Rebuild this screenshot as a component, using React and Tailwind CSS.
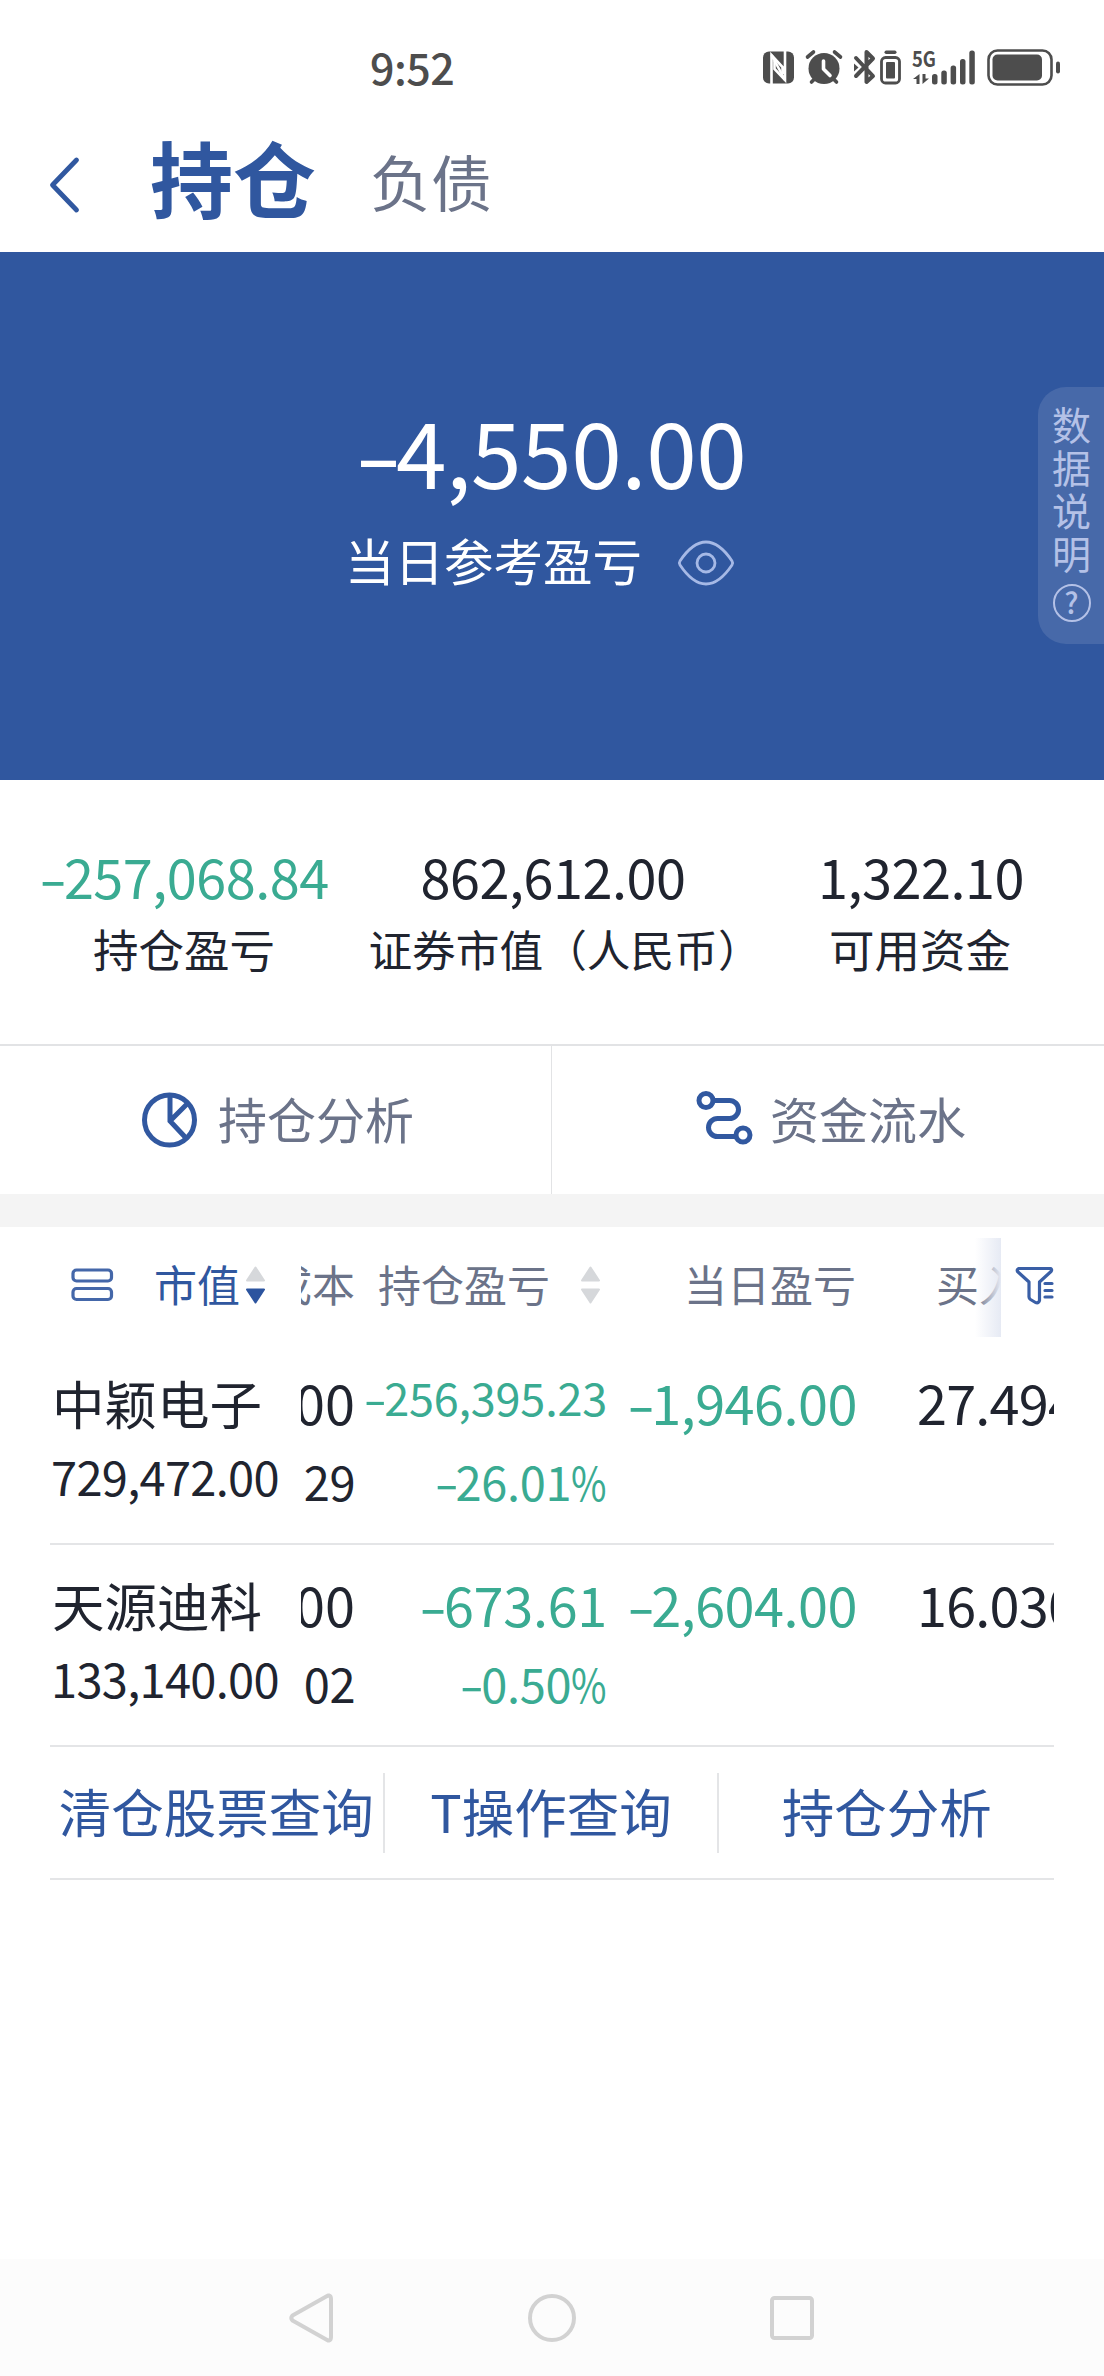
import React, { useState } from "react";

const stats = [
  { label: "持仓盈亏", value: "-257,068.84", green: true },
  { label: "证券市值（人民币）", value: "862,612.00", wide: true },
  { label: "可用资金", value: "1,322.10" },
];

const holdings = [
  {
    name: "中颖电子",
    marketValue: "729,472.00",
    price: "00",
    cost: "29",
    profit: "-256,395.23",
    rate: "-26.01%",
    today: "-1,946.00",
    buy: "27.494",
    small: true,
  },
  {
    name: "天源迪科",
    marketValue: "133,140.00",
    price: "00",
    cost: "02",
    profit: "-673.61",
    rate: "-0.50%",
    today: "-2,604.00",
    buy: "16.030",
  },
];

const links = ["清仓股票查询", "T操作查询", "持仓分析"];

// amount with a wider minus sign and a narrower percent sign
function Amount({ value }) {
  const negative = value.startsWith("-");
  const percent = value.endsWith("%");
  return (
    <>
      {negative && (
        <span className="inline-block w-[0.4em] text-center scale-x-150">
          -
        </span>
      )}
      {value.replace(/[-%]/g, "")}
      {percent && (
        <span className="inline-block w-[0.76em] origin-left scale-x-[0.82]">
          %
        </span>
      )}
    </>
  );
}

function SortArrows({ active }) {
  return (
    <svg width="21" height="38" viewBox="0 0 21 38" className="shrink-0">
      <path
        d="M10.5 1.5L19 14.5H2Z"
        fill="#d6d8db"
        stroke="#d6d8db"
        strokeWidth="2"
        strokeLinejoin="round"
      />
      <path
        d="M10.5 36.5L19 23.5H2Z"
        fill={active ? "#2c549f" : "#d6d8db"}
        stroke={active ? "#2c549f" : "#d6d8db"}
        strokeWidth="2"
        strokeLinejoin="round"
      />
    </svg>
  );
}

function StatusBar() {
  return (
    <div className="h-[112px] flex justify-between">
      <div className="pl-[370px] pt-[36px] text-[43px] leading-[60px] font-medium tracking-[-0.5px] text-[#4d4d4d]">
        9:52
      </div>
      <svg
        width="364"
        height="80"
        viewBox="0 0 364 80"
        fill="#4d4d4d"
        stroke="none"
        className="mt-[30px]"
      >
        {/* nfc */}
        <rect x="23" y="21.5" width="31" height="32" rx="6" />
        <path
          d="M31.500 54V25L42.500 37V44M45 21V50L34.500 39V31"
          fill="none"
          stroke="#fff"
          strokeWidth="2.6"
        />
        <path d="M31.500 25L45 50" stroke="#fff" strokeWidth="2.6" />
        {/* alarm */}
        <circle cx="84" cy="38.5" r="15.5" />
        <path
          d="M67.5 27L73.5 22M100.5 27L94.5 22M71.5 52L76 47.5M96.5 52L92 47.5"
          stroke="#4d4d4d"
          strokeWidth="3.6"
          strokeLinecap="round"
        />
        <path
          d="M83.5 31V39L90 45.5"
          fill="none"
          stroke="#fff"
          strokeWidth="3.6"
          strokeLinecap="round"
          strokeLinejoin="round"
        />
        {/* bluetooth */}
        <path
          d="M116 28L133 46L126.500 52V22L133 28.500L116 46"
          fill="none"
          stroke="#4d4d4d"
          strokeWidth="4"
          strokeLinecap="round"
          strokeLinejoin="round"
        />
        <path d="M114 33.500L118.500 37.500L114 41.500Z" />
        <rect x="144.500" y="20.500" width="12" height="3.500" rx="1.700" />
        <rect
          x="141.500"
          y="27.500"
          width="18"
          height="25.500"
          rx="4"
          fill="none"
          stroke="#4d4d4d"
          strokeWidth="2.800"
        />
        <rect x="146" y="32" width="9" height="16.500" rx="1" />
        {/* network */}
        <text
          x="172"
          y="37"
          fontSize="21.5"
          fontWeight="700"
          fontFamily="Noto Sans CJK SC, sans-serif"
          textLength="24"
          lengthAdjust="spacingAndGlyphs"
        >
          5G
        </text>
        <path d="M179.500 44V54H176.500V49H173ZM182.500 44V54L189 48.500H185.500V44Z" />
        <rect x="192" y="44" width="5.500" height="10.500" rx="2.500" />
        <rect x="201.300" y="40.500" width="5.500" height="14" rx="2.500" />
        <rect x="210.600" y="35.500" width="5.500" height="19" rx="2.500" />
        <rect x="220" y="29" width="5.500" height="25.500" rx="2.500" />
        <rect x="229.300" y="20.500" width="5.500" height="34" rx="2.500" />
        {/* battery */}
        <rect
          x="248.500"
          y="20.500"
          width="63"
          height="34"
          rx="9"
          fill="none"
          stroke="#4d4d4d"
          strokeWidth="2.600"
        />
        <rect x="252.500" y="24.500" width="49.500" height="26" rx="5" />
        <rect x="316" y="31.500" width="4" height="12" rx="2" />
      </svg>
    </div>
  );
}

function App() {
  const [tab, setTab] = useState("持仓");

  return (
    <div className="w-[1104px] h-[2376px] flex flex-col overflow-hidden bg-white text-[#20242f] font-['Noto_Sans_CJK_SC',sans-serif] whitespace-nowrap">
      <StatusBar />

      {/* Header */}
      <div className="h-[140px] flex items-center pl-[48px]">
        <svg width="34" height="60" viewBox="0 0 34 60" className="mt-[6px]">
          <path
            d="M28.500 5L4.500 30L28.500 55"
            fill="none"
            stroke="#3158a0"
            strokeWidth="4.800"
            strokeLinecap="round"
            strokeLinejoin="round"
          />
        </svg>
        <button
          className="ml-[68px] mt-[-12px] text-[83px] leading-[100px] font-bold text-[#30579f]"
          onClick={() => setTab("持仓")}
        >
          持仓
        </button>
        <button
          className="ml-[54px] mt-[-2px] text-[61px] leading-[80px] text-[#6b7389]"
          onClick={() => setTab("负债")}
        >
          负债
        </button>
      </div>

      {/* Today profit */}
      <div className="h-[528px] bg-[#30579f] text-white relative flex flex-col items-center">
        <div className="mt-[144px] pl-[2px] text-[91px] leading-[106px] tracking-[-0.4px]">
          <Amount value="-4,550.00" />
        </div>
        <div className="mt-[26px] flex items-center pr-[34px]">
          <span className="ml-[10px] text-[49.5px] leading-[64px]">当日参考盈亏</span>
          <svg
            width="58"
            height="48"
            viewBox="0 0 58 48"
            fill="none"
            stroke="#a6b9e6"
            strokeWidth="2.800"
            className="ml-[35px] mt-[5px]"
          >
            <path d="M3 22Q1.700 24 3 26C11 38 19 45 29 45S47 38 55 26Q56.300 24 55 22C47 10 39 3 29 3S11 10 3 22Z" />
            <circle cx="29" cy="24" r="9" />
          </svg>
        </div>
        <div className="absolute right-0 top-[135px] w-[66px] h-[257px] rounded-l-[28px] bg-[#4769a9] text-[#b4c1e7] flex flex-col items-center pt-[15px] pl-[1px]">
          {["数", "据", "说", "明"].map((ch) => (
            <span key={ch} className="h-[43px] text-[39px] leading-[43px]">
              {ch}
            </span>
          ))}
          <span className="mt-[10px] size-[38px] rounded-full border-[2.5px] border-[#b4c1e7] text-[29px] leading-[30px] font-medium text-center">
            ?
          </span>
        </div>
      </div>

      {/* Stats */}
      <div className="h-[264px] grid grid-cols-3">
        {stats.map((item) => (
          <div key={item.label} className="flex flex-col items-center pt-[63px]">
            <div
              className={
                item.green
                  ? "pl-[3px] text-[54px] leading-[66px] tracking-[-0.5px] text-[#3aab92]"
                  : "pl-[2px] text-[54px] leading-[66px] tracking-[-0.5px]"
              }
            >
              <Amount value={item.value} />
            </div>
            <div
              className={
                item.wide
                  ? "ml-[26px] mt-[9px] text-[43.7px] leading-[60px]"
                  : "mt-[9px] text-[45.5px] leading-[60px]"
              }
            >
              {item.label}
            </div>
          </div>
        ))}
      </div>

      {/* Shortcuts */}
      <div className="h-[150px] grid grid-cols-2 border-t-2 border-[#e2e3e5] text-[49px] text-[#6b7389]">
        <div className="flex items-center pl-[142px] border-r border-[#e2e3e5]">
          <svg
            width="56"
            height="58"
            viewBox="0 0 56 58"
            fill="none"
            stroke="#3158a0"
            strokeWidth="5"
            className="-mt-px"
          >
            <circle cx="27.500" cy="29" r="25" />
            <path d="M28 5V30L44 47M28 30L46 12" />
          </svg>
          <span className="ml-[20px] -mt-[5px]">持仓分析</span>
        </div>
        <div className="flex items-center pl-[144px]">
          <svg
            width="58"
            height="58"
            viewBox="0 0 58 58"
            fill="none"
            stroke="#3158a0"
            strokeWidth="5"
            className="-mt-[3px]"
          >
            <circle cx="10" cy="10.500" r="7" />
            <path d="M17 10.500H33.500A9 9 0 0 1 33.500 28.500H21.500A9 9 0 0 0 21.500 46.500H40" />
            <circle cx="47" cy="45" r="7" />
          </svg>
          <span className="ml-[16px] -mt-[5px]">资金流水</span>
        </div>
      </div>

      <div className="h-[33px] bg-[#f4f4f4]" />

      {/* Table header */}
      <div className="h-[116px] flex pl-[50px] text-[43px] leading-[114px] text-[#6b7389]">
        <div className="w-[251px] flex items-center pl-[21px] text-[#30579f]">
          <svg
            width="43"
            height="34"
            viewBox="0 0 43 34"
            fill="none"
            stroke="#4467a9"
            strokeWidth="3.200"
          >
            <rect x="2" y="2" width="38.500" height="11" rx="3.500" />
            <rect x="2" y="20.500" width="38.500" height="11" rx="3.500" />
          </svg>
          <span className="ml-[40px] -mt-[4px]">市值</span>
          <span className="ml-[5px]">
            <SortArrows active />
          </span>
        </div>
        <div className="w-[700px] flex relative overflow-hidden -mt-px">
          <div className="w-[54px] shrink-0 flex justify-end">成本</div>
          <div className="w-[252px] h-[114px] shrink-0 flex items-center pl-[23px]">
            持仓盈亏
            <span className="ml-[30px] mt-[3px]">
              <SortArrows />
            </span>
          </div>
          <div className="w-[249px] shrink-0 text-right">当日盈亏</div>
          <div className="shrink-0 pl-[80px]">买入</div>
          <div className="absolute right-0 top-[12px] w-[26px] h-[99px] bg-linear-to-r from-[#e6eaf4]/0 to-[#e6eaf4]" />
        </div>
        <svg
          width="40"
          height="40"
          viewBox="0 0 40 40"
          fill="none"
          stroke="#3a5fa6"
          strokeWidth="3.200"
          strokeLinecap="round"
          strokeLinejoin="round"
          className="ml-[14px] mt-[39px]"
        >
          <path d="M4 2.500H35.500Q37.500 3.500 36 5.500L24.500 16V34.500Q23.500 37.500 20.500 36.500L15.500 33.500Q14 32.500 14 31V16L2.500 5.500Q1.500 3.500 4 2.500Z" />
          <path d="M30 17.500H37M30 24.500H37M30 31H37" />
        </svg>
      </div>

      {/* Holdings */}
      <div className="ml-[50px] w-[1004px]">
        {holdings.map((row) => (
          <div key={row.name} className="h-[202px] flex border-b-2 border-[#e4e5e7]">
            <div className="w-[251px] shrink-0 pt-[22px] pl-[2px]">
              <div className="text-[52.5px] leading-[74px]">{row.name}</div>
              <div className="-ml-px text-[47px] leading-[74px] tracking-[-0.7px]">
                {row.marketValue}
              </div>
            </div>
            <div className="w-[753px] flex overflow-hidden pt-[22px]">
              <div className="w-[54px] shrink-0 flex flex-col items-end">
                <div className="text-[54px] leading-[74px]">{row.price}</div>
                <div className="text-[47px] leading-[84px] tracking-[-0.5px]">
                  {row.cost}
                </div>
              </div>
              <div className="w-[252px] shrink-0 flex flex-col items-end text-[#3aab92]">
                <div
                  className={
                    row.small
                      ? "h-[74px] text-[45px] leading-[64px] tracking-[-0.2px]"
                      : "text-[54px] leading-[74px] tracking-[-0.3px]"
                  }
                >
                  <Amount value={row.profit} />
                </div>
                <div className="text-[47px] leading-[84px] tracking-[-0.3px]">
                  <Amount value={row.rate} />
                </div>
              </div>
              <div className="w-[250px] shrink-0 text-right text-[54px] leading-[74px] tracking-[-0.5px] text-[#3aab92]">
                <Amount value={row.today} />
              </div>
              <div className="shrink-0 pl-[60px] text-[54px] leading-[74px] tracking-[-0.8px]">
                {row.buy}
              </div>
            </div>
          </div>
        ))}

        <div className="h-[133px] grid grid-cols-3 items-center border-b-2 border-[#e4e5e7] text-[52.5px] text-[#30579f]">
          {links.map((link) => (
            <div
              key={link}
              className="h-[80px] leading-[74px] text-center border-r-2 border-[#e4e5e7] last:border-r-0"
            >
              {link}
            </div>
          ))}
        </div>
      </div>

      {/* System navigation */}
      <div className="mt-auto h-[117px] bg-[#fcfcfc] flex items-center justify-center gap-[192px]">
        <svg
          width="48"
          height="52"
          viewBox="0 0 48 52"
          fill="none"
          stroke="#d2d2d2"
          strokeWidth="4"
          strokeLinejoin="round"
        >
          <path d="M41 3.500Q43 4 43 7V45Q43 48 41 48.500H40L4.500 28.500Q2 26 4.500 23.500L40 3.500Z" />
        </svg>
        <svg
          width="48"
          height="48"
          viewBox="0 0 48 48"
          fill="none"
          stroke="#d2d2d2"
          strokeWidth="4"
        >
          <circle cx="24" cy="24" r="22" />
        </svg>
        <svg
          width="48"
          height="48"
          viewBox="0 0 48 48"
          fill="none"
          stroke="#d2d2d2"
          strokeWidth="4"
        >
          <rect x="4" y="4" width="40" height="40" rx="2.500" />
        </svg>
      </div>
    </div>
  );
}

export default App;
